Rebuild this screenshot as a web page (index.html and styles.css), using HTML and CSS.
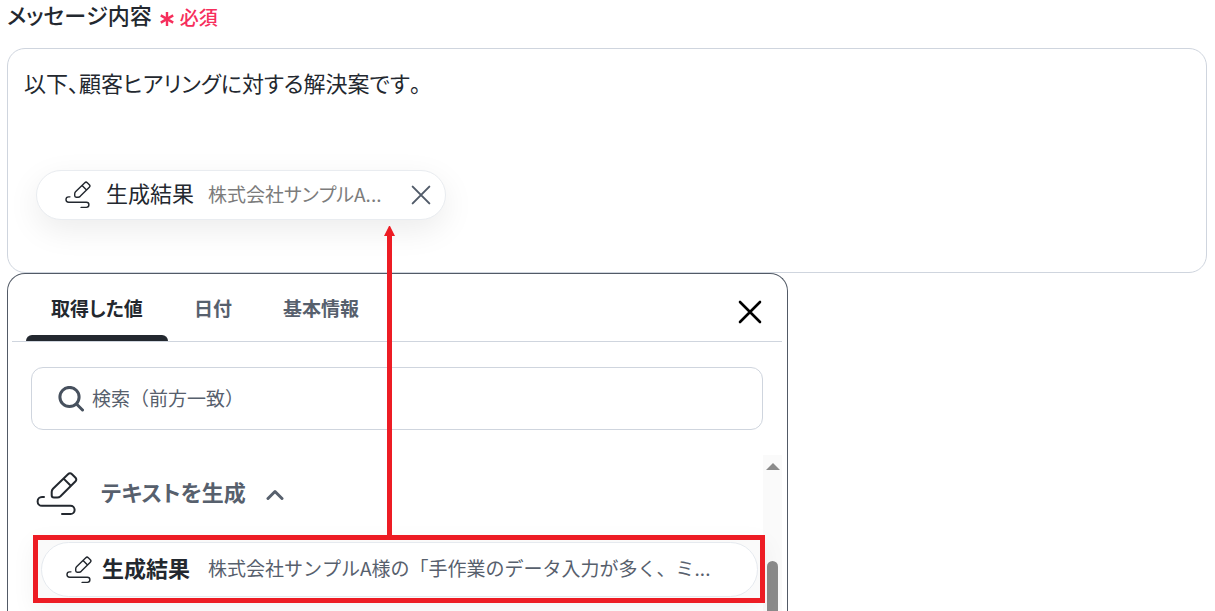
FILE: index.html
```html
<!DOCTYPE html>
<html lang="ja">
<head>
<meta charset="utf-8">
<title>メッセージ内容</title>
<link rel="stylesheet" href="styles.css">
</head>
<body>
<svg class="symbols" aria-hidden="true">
  <symbol id="compose" viewBox="0 0 42 44">
    <path d="M8 25H6a4.4 4.4 0 0 0 0 8.8h28.5a4.1 4.1 0 0 1 0 8.2H26"/>
    <path d="M32 2.2q2-2 4 0l3.3 3.3q2 2 0 4L24.5 24.2q-1.4 1.3-3.2 1.3h-3.3q-2.3 0-2.3-2.3v-3.3q0-1.8 1.3-3.2zM27.6 6.6l7.2 7.2"/>
  </symbol>
  <symbol id="cross" viewBox="0 0 24 24"><path d="M2 2l20 20M22 2L2 22"/></symbol>
</svg>
<main class="page">
  <div class="field-head">
    <span class="field-title" id="message-label">メッセージ内容</span>
    <svg class="asterisk" viewBox="0 0 14 14" aria-hidden="true"><path d="M7 0v14M.8 3.4l12.4 7.2M13.2 3.4L.8 10.6"/></svg>
    <span class="required">必須</span>
  </div>
  <div class="editor" role="textbox" aria-multiline="true" aria-labelledby="message-label">
    <p class="message">以下、顧客ヒアリングに対する解決案です。</p>
    <div class="chip">
      <svg class="icon-small" aria-hidden="true"><use href="#compose"/></svg>
      <span class="chip-name">生成結果</span>
      <span class="chip-preview">株式会社サンプルA...</span>
      <button class="chip-remove" type="button" aria-label="削除"><svg aria-hidden="true"><use href="#cross"/></svg></button>
    </div>
  </div>
  <section class="panel">
    <header class="panel-head">
      <div class="tabs" role="tablist">
        <button class="tab active" type="button" role="tab" aria-selected="true">取得した値</button>
        <button class="tab" type="button" role="tab" aria-selected="false">日付</button>
        <button class="tab" type="button" role="tab" aria-selected="false">基本情報</button>
      </div>
      <button class="close" type="button" aria-label="閉じる"><svg aria-hidden="true"><use href="#cross"/></svg></button>
    </header>
    <div class="search">
      <svg class="search-icon" viewBox="0 0 26 26" aria-hidden="true"><circle cx="11.5" cy="11" r="9.6"/><path d="M18.5 18l6 6"/></svg>
      <input class="search-input" type="text" placeholder="検索（前方一致）" aria-label="検索">
    </div>
    <div class="results">
      <div class="list">
        <button class="group" type="button" aria-expanded="true">
          <svg class="icon-large" aria-hidden="true"><use href="#compose"/></svg>
          <span class="group-name">テキストを生成</span>
          <svg class="chevron" viewBox="0 0 18 12" aria-hidden="true"><path d="M2 10.5l7-7 7 7"/></svg>
        </button>
        <div class="highlight">
          <button class="item" type="button">
            <svg class="icon-small" aria-hidden="true"><use href="#compose"/></svg>
            <span class="item-name">生成結果</span>
            <span class="item-preview">株式会社サンプルA様の「手作業のデータ入力が多く、ミ...</span>
          </button>
          <span class="arrow" aria-hidden="true"></span>
        </div>
      </div>
      <div class="scrollbar" aria-hidden="true">
        <span class="scroll-up"></span>
        <span class="scroll-thumb"></span>
      </div>
    </div>
  </section>
</main>
</body>
</html>
```
FILE: styles.css
```css
* { box-sizing: border-box; }
body {
  margin: 0;
  color: #23282f;
  background: #fff;
  font-family: "Noto Sans CJK JP", sans-serif;
  font-size: 19px;
  font-kerning: none;
}
button, input { font: inherit; font-kerning: none; color: inherit; border: 0; background: none; padding: 0; }
button { cursor: pointer; }
svg { flex: none; fill: none; stroke: currentColor; stroke-width: 2; stroke-linecap: round; stroke-linejoin: round; }
.symbols { display: none; }
.page { display: flex; flex-direction: column; height: 100vh; padding: 0 8px 0 7px; overflow: hidden; }

.field-head { display: flex; align-items: center; height: 30px; margin-bottom: 18px; font-weight: 500; font-feature-settings: "palt"; }
.field-title { padding-bottom: 2px; font-size: 22px; line-height: 28px; }
.asterisk { width: 14px; height: 14px; margin: 8px 6px 0 8px; color: #f62e5c; stroke-width: 2.4; stroke-linecap: butt; }
.required { margin-top: 4px; color: #f62e5c; line-height: 28px; }

.editor { flex: none; min-height: 225px; padding: 17px 16px; border: 1px solid #cfd5de; border-radius: 18px; font-feature-settings: "palt"; }
.message { margin: 0; font-size: 22px; line-height: 32px; }
.chip {
  display: flex; align-items: center; width: 410px; max-width: 100%; height: 50px;
  margin: 72px 12px 0; padding: 0 14px 0 28px;
  border: 1px solid #e9ecf0; border-radius: 25px; background: #fff;
  box-shadow: 0 10px 32px rgba(0, 0, 0, .08);
}
.icon-small { width: 26px; height: 28px; stroke-width: 2.3; }
.chip-name { margin: 0 14px 0 15px; padding-bottom: 6px; font-size: 22px; line-height: 32px; }
.chip-preview { padding-bottom: 4px; color: #7c7c7c; }
.chip-remove { display: flex; margin-left: auto; color: #515b69; }
.chip-remove svg { width: 20px; height: 20px; stroke-width: 2.4; }

.panel {
  display: flex; flex: 1; flex-direction: column; width: 781px; max-width: 100%; min-height: 0;
  padding: 0 5px 0 4px; border: 1px solid #525a66; border-bottom: 0; border-radius: 18px 18px 0 0;
}
.panel-head { display: flex; flex: none; justify-content: space-between; height: 68px; padding: 0 20px 0 14px; border-bottom: 1px solid #cfd5de; }
.tabs { display: flex; gap: 1px; }
.tab { position: relative; padding: 0 25px; color: #57606d; font-weight: 700; line-height: 28px; font-feature-settings: "palt"; }
.active { color: #23282f; }
.active::after { content: ""; position: absolute; right: 0; bottom: 0; left: 0; height: 6px; border-radius: 6px 6px 0 0; background: #23282f; }
.close { display: flex; align-items: center; padding-top: 8px; color: #000; }
.close svg { width: 24px; height: 24px; stroke-width: 2.6; }

.search {
  display: flex; flex: none; align-items: center; height: 63px; margin: 25px 19px 0; padding: 0 24px 0 26px;
  border: 1px solid #cfd5de; border-radius: 12px;
}
.search-icon { width: 26px; height: 26px; margin-right: 8px; color: #47515e; stroke-width: 3; }
.search-input { flex: 1; min-width: 0; padding-bottom: 2px; outline: 0; }
.search-input::placeholder { color: #57606d; opacity: 1; }

.results { display: flex; flex: 1; min-height: 0; padding-top: 25px; }
.list { flex: 1; min-width: 0; margin-right: -2px; padding-left: 21px; }
.group { display: flex; align-items: center; height: 80px; padding: 0 0 2px 3px; color: #57606d; font-size: 22px; font-weight: 700; font-feature-settings: "palt"; }
.icon-large { width: 42px; height: 44px; margin-right: 23px; color: #23282f; }
.group-name { padding-bottom: 7px; }
.chevron { width: 18px; height: 12px; margin-left: 20px; stroke-width: 3; }
.highlight { position: relative; z-index: 1; padding: 2px 2px 1px 3px; border: 5px solid #ed1c24; background: #fafafa; box-shadow: 0 8px 24px rgba(0, 0, 0, .05); }
.item {
  display: flex; align-items: center; width: 100%; height: 55px; padding: 0 24px; text-align: left;
  border: 1px solid #e6eaef; border-radius: 28px; background: #fff;
}
.item-name { margin: 0 18px 0 10px; padding-bottom: 5px; font-size: 22px; font-weight: 700; line-height: 32px; }
.item-preview { padding-bottom: 4px; overflow: hidden; color: #57606d; white-space: nowrap; }
.arrow {
  position: absolute; bottom: 100%; left: 346px; width: 11px; height: 314px; background: #ed1c24;
  clip-path: polygon(5px 0, 6px 0, 11px 10px, 8px 10px, 8px 100%, 3px 100%, 3px 10px, 0 10px);
}

.scrollbar { display: flex; flex-direction: column; align-items: center; width: 19px; padding-top: 8px; background: #fafafa; }
.scroll-up { border: solid transparent; border-width: 0 7px 7px; border-bottom-color: #8b8b8b; }
.scroll-thumb { flex: 1; width: 11px; margin-top: 91px; border-radius: 6px 6px 0 0; background: #8b8b8b; }
```
